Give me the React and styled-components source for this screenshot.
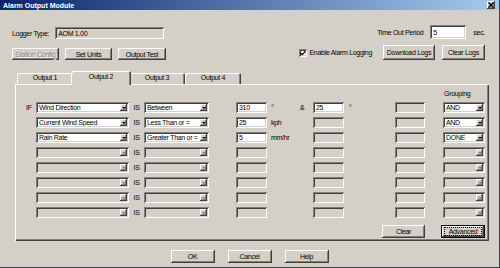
import React from "react";
import styled, { createGlobalStyle, css } from "styled-components";

const FACE = "#d4d0c8";
const SHADOW = "#808080";
const DARK = "#404040";

const GlobalStyle = createGlobalStyle`
  html, body {
    margin: 0;
    padding: 0;
    background: ${FACE};
  }
  body {
    font-family: "Liberation Sans", Arial, sans-serif;
    font-size: 7px;
    letter-spacing: -0.3px;
    color: #000;
  }
`;

const raised = css`
  box-shadow: inset -1px -1px ${DARK}, inset 1px 1px #fff, inset -2px -2px ${SHADOW};
`;

const sunken = css`
  box-shadow: inset 1px 1px ${SHADOW}, inset -1px -1px #fff, inset 2px 2px ${DARK},
    inset -2px -2px ${FACE};
`;

const Window = styled.div`
  width: 500px;
  height: 268px;
  box-sizing: border-box;
  background: ${FACE};
  border-right: 1px solid ${DARK};
  border-bottom: 1px solid ${DARK};
  display: flex;
  flex-direction: column;
  overflow: hidden;
`;

const TitleBar = styled.div`
  height: 10px;
  flex: none;
  display: flex;
  align-items: center;
  justify-content: space-between;
  padding: 0 4px 0 3px;
  background: linear-gradient(to right, #0a246a, #a6caf0);
  color: #fff;
  font-weight: bold;
  letter-spacing: 0;
`;

const CloseBox = styled.div`
  width: 8px;
  height: 8px;
  background: ${FACE};
  ${raised};
  display: flex;
  align-items: center;
  justify-content: center;
`;

const Body = styled.div`
  padding: 15px 10px 0 12px;
`;

const TopSection = styled.div`
  display: flex;
  justify-content: space-between;
  padding-right: 4px;
`;

const LeftColumn = styled.div`
  display: flex;
  flex-direction: column;
  gap: 9px;
  padding-top: 2px;
`;

const RightColumn = styled.div`
  display: flex;
  flex-direction: column;
  gap: 6px;
`;

const Row = styled.div`
  display: flex;
  align-items: center;
  justify-content: ${(p) => (p.$end ? "flex-end" : "flex-start")};
  gap: ${(p) => p.$gap || 0}px;
  height: ${(p) => p.$h || 12}px;
`;

const Label = styled.span`
  white-space: nowrap;
  margin-left: ${(p) => p.$ml || 0}px;
  margin-right: ${(p) => p.$mr || 0}px;
`;

const Field = styled.div`
  box-sizing: border-box;
  width: ${(p) => (p.$w ? `${p.$w}px` : "100%")};
  height: ${(p) => p.$h || 11}px;
  padding: 0 3px;
  display: flex;
  align-items: center;
  white-space: nowrap;
  overflow: hidden;
  background: ${(p) => (p.$disabled ? FACE : "#fff")};
  ${sunken};
`;

const Button = styled.button`
  box-sizing: border-box;
  width: ${(p) => p.$w}px;
  height: ${(p) => p.$h || 12}px;
  padding: 0;
  border: none;
  background: ${FACE};
  font: inherit;
  letter-spacing: inherit;
  color: #000;
  position: relative;
  ${raised};

  &:disabled {
    color: ${SHADOW};
    text-shadow: 1px 1px #fff;
  }

  ${(p) =>
    p.$default &&
    css`
      box-shadow: inset 0 0 0 1px #000, inset -2px -2px ${DARK}, inset 2px 2px #fff,
        inset -3px -3px ${SHADOW};
      &::after {
        content: "";
        position: absolute;
        inset: 2px 3px;
        border: 1px dotted #000;
        pointer-events: none;
      }
    `}
`;

const CheckBox = styled.span`
  box-sizing: border-box;
  width: 8px;
  height: 8px;
  background: #fff;
  ${sunken};
  display: flex;
  align-items: center;
  justify-content: center;
  margin-right: 3px;
`;

const TabStrip = styled.div`
  display: flex;
  align-items: flex-end;
  height: 14px;
  margin: 11px 0 -1px 5px;
  position: relative;
  z-index: 1;
`;

const Tab = styled.div`
  box-sizing: border-box;
  width: ${(p) => (p.$active ? 60 : 56)}px;
  height: ${(p) => (p.$active ? 14 : 11)}px;
  margin: ${(p) => (p.$active ? "0 -2px" : "0 0 1px 0")};
  position: relative;
  z-index: ${(p) => (p.$active ? 2 : 1)};
  display: flex;
  justify-content: center;
  padding-top: ${(p) => (p.$active ? 2 : 1)}px;
  background: ${FACE};
  border-radius: 2px 2px 0 0;
  box-shadow: inset 1px 1px #fff, inset -1px 0 ${DARK}, inset -2px 0 ${SHADOW};
`;

const Panel = styled.div`
  box-sizing: border-box;
  height: 157px;
  margin-left: 3px;
  padding: 4px 4px 3px 11px;
  background: ${FACE};
  box-shadow: inset 1px 1px #fff, inset -1px -1px ${DARK}, inset -2px -2px ${SHADOW};
  display: grid;
  grid-template-columns: 10px 93px 15px 65px 27px 31px 31px 15px 31px 51px 30px 18px 42px;
  grid-template-rows: 10px repeat(8, 11px) 16px;
  row-gap: 4px;
  align-items: center;
`;

const HeaderCell = styled.span`
  grid-column: ${(p) => p.$col};
  white-space: nowrap;
  padding-left: 1px;
`;

const Keyword = styled.span`
  text-align: ${(p) => (p.$center ? "center" : "left")};
`;

const Unit = styled.span`
  padding-left: ${(p) => p.$pl || 4}px;
  white-space: nowrap;
`;

const Combo = styled.div`
  box-sizing: border-box;
  height: 11px;
  padding: 2px;
  display: flex;
  align-items: center;
  background: ${(p) => (p.$disabled ? FACE : "#fff")};
  ${sunken};
`;

const ComboText = styled.span`
  flex: 1;
  padding-left: 1px;
  white-space: nowrap;
  overflow: hidden;
`;

const ArrowButton = styled.span`
  flex: none;
  box-sizing: border-box;
  width: 7px;
  height: 7px;
  background: ${FACE};
  ${raised};
  display: flex;
  align-items: center;
  justify-content: center;

  &::before {
    content: "";
    border-left: 2px solid transparent;
    border-right: 2px solid transparent;
    border-top: 2px solid ${(p) => (p.$disabled ? SHADOW : "#000")};
  }
`;

const ActionCell = styled.div`
  grid-column: ${(p) => p.$col};
  justify-self: end;
  align-self: end;
`;

const Footer = styled.div`
  display: flex;
  justify-content: center;
  gap: 13px;
  margin-top: 9px;
`;

const rows = [
  { field: "Wind Direction", op: "Between", v1: "310", u1: "°", amp: true, v2: "25", u2: "°", group: "AND" },
  { field: "Current Wind Speed", op: "Less Than or =", v1: "25", u1: "kph", group: "AND" },
  { field: "Rain Rate", op: "Greater Than or =", v1: "5", u1: "mm/hr", group: "DONE" },
  {}, {}, {}, {}, {},
];

const Dropdown = ({ value, disabled }) => (
  <Combo $disabled={disabled}>
    <ComboText>{value}</ComboText>
    <ArrowButton $disabled={disabled} />
  </Combo>
);

export default function App() {
  return (
    <>
      <GlobalStyle />
      <Window>
        <TitleBar>
          <span>Alarm Output Module</span>
          <CloseBox>
            <svg width="6" height="6" viewBox="0 0 6 6">
              <path d="M0.5 0.5 L5.5 5.5 M5.5 0.5 L0.5 5.5" stroke="#000" strokeWidth="1.3" />
            </svg>
          </CloseBox>
        </TitleBar>

        <Body>
          <TopSection>
            <LeftColumn>
              <Row $gap={6}>
                <Label>Logger Type:</Label>
                <Field $w={109} $h={12} $disabled>
                  AOM 1.00
                </Field>
              </Row>
              <Row $gap={6}>
                <Button $w={47} disabled>
                  Station Config
                </Button>
                <Button $w={47}>Set Units</Button>
                <Button $w={48}>Output Test</Button>
              </Row>
            </LeftColumn>

            <RightColumn>
              <Row $end $h={14}>
                <Label $mr={7}>Time Out Period</Label>
                <Field $w={36} $h={14}>
                  5
                </Field>
                <Label $ml={7}>sec.</Label>
              </Row>
              <Row $end $h={15}>
                <CheckBox>
                  <svg width="6" height="6" viewBox="0 0 6 6">
                    <path d="M0.5 2.8 L2.3 4.6 L5.5 1.2" stroke="#000" strokeWidth="1.2" fill="none" />
                  </svg>
                </CheckBox>
                <Label $mr={11}>Enable Alarm Logging</Label>
                <Button $w={52} $h={15}>
                  Download Logs
                </Button>
                <Button $w={43} $h={15} style={{ marginLeft: 7 }}>
                  Clear Logs
                </Button>
              </Row>
            </RightColumn>
          </TopSection>

          <TabStrip>
            <Tab>Output 1</Tab>
            <Tab $active>Output 2</Tab>
            <Tab>Output 3</Tab>
            <Tab>Output 4</Tab>
          </TabStrip>

          <Panel>
            <HeaderCell $col={13}>Grouping</HeaderCell>
            {rows.map((r, i) => {
              const empty = !r.field;
              return (
                <React.Fragment key={i}>
                  <Keyword>{i === 0 ? "IF" : ""}</Keyword>
                  <Dropdown value={r.field} disabled={empty} />
                  <Keyword $center>IS</Keyword>
                  <Dropdown value={r.op} disabled={empty} />
                  <span />
                  <Field $disabled={empty}>{r.v1}</Field>
                  <Unit>{r.u1}</Unit>
                  <Unit $pl={2}>{r.amp ? "&" : ""}</Unit>
                  <Field $disabled={!r.v2}>{r.v2}</Field>
                  <Unit $pl={5}>{r.u2}</Unit>
                  <Field $disabled />
                  <span />
                  <Dropdown value={r.group} disabled={empty} />
                </React.Fragment>
              );
            })}
            <ActionCell $col="10 / 12">
              <Button $w={43} $h={13}>
                Clear
              </Button>
            </ActionCell>
            <ActionCell $col={13}>
              <Button $w={44} $h={13} $default>
                Advanced
              </Button>
            </ActionCell>
          </Panel>
        </Body>

        <Footer>
          <Button $w={44} $h={13}>
            OK
          </Button>
          <Button $w={44} $h={13}>
            Cancel
          </Button>
          <Button $w={44} $h={13}>
            Help
          </Button>
        </Footer>
      </Window>
    </>
  );
}
